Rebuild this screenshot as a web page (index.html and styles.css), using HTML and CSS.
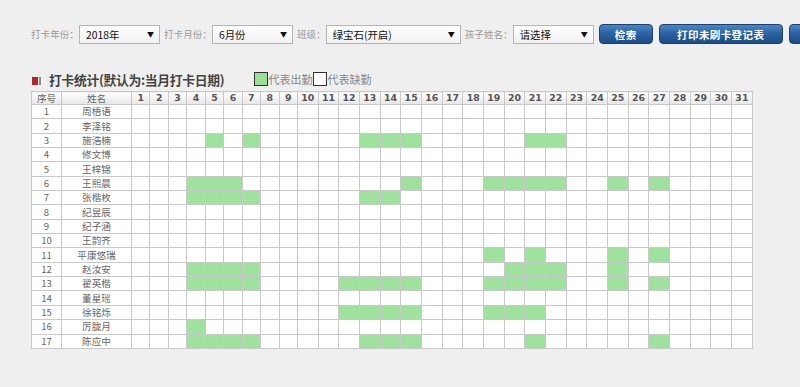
FILE: index.html
```html
<!DOCTYPE html>
<html lang="zh">
<head>
<meta charset="utf-8">
<title>打卡统计</title>
<link rel="stylesheet" href="styles.css">
</head>
<body>
<div class="toolbar">
  <span class="lbl">打卡年份：</span>
  <div class="sel w80"><span>2018年</span><span class="arr">▼</span></div>
  <span class="lbl">打卡月份：</span>
  <div class="sel w80"><span>6月份</span><span class="arr">▼</span></div>
  <span class="lbl">班级：</span>
  <div class="sel w135"><span>绿宝石(开启)</span><span class="arr">▼</span></div>
  <span class="lbl">孩子姓名：</span>
  <div class="sel w80"><span>请选择</span><span class="arr">▼</span></div>
  <button class="btn b1">检索</button>
  <button class="btn b2">打印未刷卡登记表</button>
  <button class="btn b3">导出</button>
</div>

<div class="title-row">
  <span class="mark"><i class="m-red"></i><i class="m-gray"></i></span>
  <span class="title">打卡统计(默认为:当月打卡日期)</span>
  <span class="legend"><i class="box box-on"></i>代表出勤<i class="box box-off"></i>代表缺勤</span>
</div>

<table class="grid">
  <colgroup>
    <col class="c-no"><col class="c-name">
    <col class="c-s"><col class="c-s"><col class="c-s"><col class="c-s"><col class="c-s"><col class="c-s"><col class="c-s"><col class="c-s"><col class="c-s">
    <col class="c-d"><col class="c-d"><col class="c-d"><col class="c-d"><col class="c-d"><col class="c-d"><col class="c-d"><col class="c-d"><col class="c-d"><col class="c-d"><col class="c-d">
    <col class="c-d"><col class="c-d"><col class="c-d"><col class="c-d"><col class="c-d"><col class="c-d"><col class="c-d"><col class="c-d"><col class="c-d"><col class="c-d"><col class="c-d">
  </colgroup>
  <thead>
    <tr><th class="h-txt">序号</th><th class="h-txt">姓名</th><th>1</th><th>2</th><th>3</th><th>4</th><th>5</th><th>6</th><th>7</th><th>8</th><th>9</th><th>10</th><th>11</th><th>12</th><th>13</th><th>14</th><th>15</th><th>16</th><th>17</th><th>18</th><th>19</th><th>20</th><th>21</th><th>22</th><th>23</th><th>24</th><th>25</th><th>26</th><th>27</th><th>28</th><th>29</th><th>30</th><th>31</th></tr>
  </thead>
  <tbody>
    <tr><td>1</td><td>周梧语</td><td></td><td></td><td></td><td></td><td></td><td></td><td></td><td></td><td></td><td></td><td></td><td></td><td></td><td></td><td></td><td></td><td></td><td></td><td></td><td></td><td></td><td></td><td></td><td></td><td></td><td></td><td></td><td></td><td></td><td></td><td></td></tr>
    <tr><td>2</td><td>李泽铭</td><td></td><td></td><td></td><td></td><td></td><td></td><td></td><td></td><td></td><td></td><td></td><td></td><td></td><td></td><td></td><td></td><td></td><td></td><td></td><td></td><td></td><td></td><td></td><td></td><td></td><td></td><td></td><td></td><td></td><td></td><td></td></tr>
    <tr><td>3</td><td>施浩楠</td><td></td><td></td><td></td><td></td><td class="g"></td><td></td><td class="g"></td><td></td><td></td><td></td><td></td><td></td><td class="g"></td><td class="g"></td><td class="g"></td><td></td><td></td><td></td><td></td><td></td><td class="g"></td><td class="g"></td><td></td><td></td><td></td><td></td><td></td><td></td><td></td><td></td><td></td></tr>
    <tr><td>4</td><td>修文博</td><td></td><td></td><td></td><td></td><td></td><td></td><td></td><td></td><td></td><td></td><td></td><td></td><td></td><td></td><td></td><td></td><td></td><td></td><td></td><td></td><td></td><td></td><td></td><td></td><td></td><td></td><td></td><td></td><td></td><td></td><td></td></tr>
    <tr><td>5</td><td>王梓锦</td><td></td><td></td><td></td><td></td><td></td><td></td><td></td><td></td><td></td><td></td><td></td><td></td><td></td><td></td><td></td><td></td><td></td><td></td><td></td><td></td><td></td><td></td><td></td><td></td><td></td><td></td><td></td><td></td><td></td><td></td><td></td></tr>
    <tr><td>6</td><td>王熙晨</td><td></td><td></td><td></td><td class="g"></td><td class="g"></td><td class="g"></td><td></td><td></td><td></td><td></td><td></td><td></td><td></td><td></td><td class="g"></td><td></td><td></td><td></td><td class="g"></td><td class="g"></td><td class="g"></td><td class="g"></td><td></td><td></td><td class="g"></td><td></td><td class="g"></td><td></td><td></td><td></td><td></td></tr>
    <tr><td>7</td><td>张楷枚</td><td></td><td></td><td></td><td class="g"></td><td class="g"></td><td class="g"></td><td class="g"></td><td></td><td></td><td></td><td></td><td></td><td class="g"></td><td class="g"></td><td></td><td></td><td></td><td></td><td></td><td></td><td></td><td></td><td></td><td></td><td></td><td></td><td></td><td></td><td></td><td></td><td></td></tr>
    <tr><td>8</td><td>纪昱辰</td><td></td><td></td><td></td><td></td><td></td><td></td><td></td><td></td><td></td><td></td><td></td><td></td><td></td><td></td><td></td><td></td><td></td><td></td><td></td><td></td><td></td><td></td><td></td><td></td><td></td><td></td><td></td><td></td><td></td><td></td><td></td></tr>
    <tr><td>9</td><td>纪子涵</td><td></td><td></td><td></td><td></td><td></td><td></td><td></td><td></td><td></td><td></td><td></td><td></td><td></td><td></td><td></td><td></td><td></td><td></td><td></td><td></td><td></td><td></td><td></td><td></td><td></td><td></td><td></td><td></td><td></td><td></td><td></td></tr>
    <tr><td>10</td><td>王韵齐</td><td></td><td></td><td></td><td></td><td></td><td></td><td></td><td></td><td></td><td></td><td></td><td></td><td></td><td></td><td></td><td></td><td></td><td></td><td></td><td></td><td></td><td></td><td></td><td></td><td></td><td></td><td></td><td></td><td></td><td></td><td></td></tr>
    <tr><td>11</td><td>平康悠瑞</td><td></td><td></td><td></td><td></td><td></td><td></td><td></td><td></td><td></td><td></td><td></td><td></td><td></td><td></td><td></td><td></td><td></td><td></td><td class="g"></td><td></td><td class="g"></td><td></td><td></td><td></td><td class="g"></td><td></td><td class="g"></td><td></td><td></td><td></td><td></td></tr>
    <tr><td>12</td><td>赵汝安</td><td></td><td></td><td></td><td class="g"></td><td class="g"></td><td class="g"></td><td class="g"></td><td></td><td></td><td></td><td></td><td></td><td></td><td></td><td></td><td></td><td></td><td></td><td></td><td class="g"></td><td class="g"></td><td class="g"></td><td></td><td></td><td class="g"></td><td></td><td></td><td></td><td></td><td></td><td></td></tr>
    <tr><td>13</td><td>翟英楷</td><td></td><td></td><td></td><td class="g"></td><td class="g"></td><td class="g"></td><td class="g"></td><td></td><td></td><td></td><td></td><td class="g"></td><td class="g"></td><td class="g"></td><td class="g"></td><td></td><td></td><td></td><td class="g"></td><td class="g"></td><td class="g"></td><td class="g"></td><td></td><td></td><td class="g"></td><td></td><td class="g"></td><td></td><td></td><td></td><td></td></tr>
    <tr><td>14</td><td>董星瑶</td><td></td><td></td><td></td><td></td><td></td><td></td><td></td><td></td><td></td><td></td><td></td><td></td><td></td><td></td><td></td><td></td><td></td><td></td><td></td><td></td><td></td><td></td><td></td><td></td><td></td><td></td><td></td><td></td><td></td><td></td><td></td></tr>
    <tr><td>15</td><td>徐铭烁</td><td></td><td></td><td></td><td></td><td></td><td></td><td></td><td></td><td></td><td></td><td></td><td class="g"></td><td class="g"></td><td class="g"></td><td class="g"></td><td></td><td></td><td></td><td class="g"></td><td class="g"></td><td class="g"></td><td></td><td></td><td></td><td></td><td></td><td></td><td></td><td></td><td></td><td></td></tr>
    <tr><td>16</td><td>厉胧月</td><td></td><td></td><td></td><td class="g"></td><td></td><td></td><td></td><td></td><td></td><td></td><td></td><td></td><td></td><td></td><td></td><td></td><td></td><td></td><td></td><td></td><td></td><td></td><td></td><td></td><td></td><td></td><td></td><td></td><td></td><td></td><td></td></tr>
    <tr><td>17</td><td>陈应中</td><td></td><td></td><td></td><td class="g"></td><td class="g"></td><td class="g"></td><td class="g"></td><td></td><td></td><td></td><td></td><td></td><td class="g"></td><td class="g"></td><td class="g"></td><td></td><td></td><td></td><td></td><td></td><td class="g"></td><td></td><td></td><td></td><td></td><td></td><td class="g"></td><td></td><td></td><td></td><td></td></tr>
  </tbody>
</table>
</body>
</html>
```

FILE: styles.css
```css
html, body {
  margin: 0;
  padding: 0;
  background: #efefef;
  font-family: "Noto Sans CJK SC", "Liberation Sans", sans-serif;
  overflow: hidden;
}

.toolbar {
  display: flex;
  align-items: center;
  height: 20px;
  margin-top: 24px;
  padding-left: 31px;
  white-space: nowrap;
  overflow: hidden;
}
.toolbar > * { flex: none; }

.lbl {
  font-size: 9.6px;
  color: #9a9a9a;
  line-height: 19px;
}

.sel {
  box-sizing: border-box;
  height: 19px;
  display: flex;
  align-items: center;
  justify-content: space-between;
  padding: 0 5px 0 6px;
  border: 1px solid #b5b5b5;
  background: linear-gradient(#ffffff, #f1f1f1);
  font-size: 10.4px;
  color: #111;
  margin-right: 4px;
}
.sel .arr {
  font-size: 7px;
  color: #111;
}
.w80 { width: 81px; }
.w135 { width: 135px; }

.btn {
  box-sizing: border-box;
  height: 20px;
  margin: 0 5px 0 1px;
  padding: 0;
  border: 1px solid #1d3f6a;
  border-radius: 4px;
  background: linear-gradient(#4a86c4 0%, #2c64a3 45%, #1b4c86 100%);
  color: #fff;
  font-family: "Noto Sans CJK SC", sans-serif;
  font-size: 10.5px;
  font-weight: bold;
  letter-spacing: 0.4px;
}
.b1 { width: 54px; }
.b2 { width: 124px; }
.b3 { width: 60px; }

.title-row {
  display: flex;
  align-items: center;
  height: 18px;
  margin: 26px 0 3px 32px;
}
.mark {
  display: flex;
  gap: 1px;
  margin-top: 4px;
  margin-right: 8px;
}
.mark i { display: block; height: 8px; }
.m-red { width: 6px; background: #b3232a; }
.m-gray { width: 2px; background: #8a8a8a; }

.title {
  font-size: 12.8px;
  font-weight: bold;
  color: #444;
  letter-spacing: -0.3px;
}

.legend {
  display: flex;
  align-items: center;
  margin-left: 30px;
  font-size: 11px;
  color: #888;
}
.box {
  display: block;
  box-sizing: border-box;
  width: 14px;
  height: 14px;
  border: 1px solid #333;
}
.box-on { background: #99e199; }
.box-off { background: #fff; margin-left: 1px; }

.grid {
  margin-left: 31px;
  border-collapse: collapse;
  table-layout: fixed;
  width: 721px;
  background: #fff;
}
.c-no { width: 30px; }
.c-name { width: 70px; }
.c-s { width: 18.44px; }
.c-d { width: 20.68px; }

.grid th, .grid td {
  border: 1px solid #c9c9c9;
  padding: 0;
  text-align: center;
  overflow: hidden;
  white-space: nowrap;
}
.grid th {
  height: 12px;
  line-height: 12px;
  background: linear-gradient(#ffffff, #e6e6e6);
  font-family: "DejaVu Sans", sans-serif;
  font-size: 9.4px;
  font-weight: bold;
  color: #555;
}
.grid th.h-txt {
  font-family: "Noto Sans CJK SC", sans-serif;
  font-weight: normal;
  font-size: 9.6px;
  color: #666;
}
.grid td {
  height: 13.35px;
  line-height: 13px;
  font-size: 9.6px;
  color: #666;
}
.grid td.g { background: #9ee29e; }
```
